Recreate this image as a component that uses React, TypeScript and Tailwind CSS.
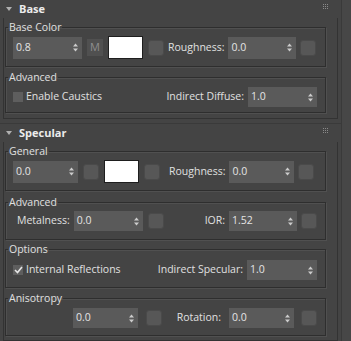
import React from "react";

const FONT = "font-['Open_Sans',sans-serif]";

const Arrows = () => (
  <svg width="5" height="9" viewBox="0 0 5 9" className="shrink-0">
    <path d="M2.5 0.5 L5 3.5 L0 3.5 Z" fill="#cccccc" />
    <path d="M0 5.5 L5 5.5 L2.5 8.5 Z" fill="#cccccc" />
  </svg>
);

const Spinner = ({
  value,
  w,
  tall,
}: {
  value: string;
  w: string;
  tall?: boolean;
}) => (
  <div
    className={`flex items-center justify-between bg-[#5a5a5a] pl-[3px] pr-[4px] text-[#e4e4e4] ${w} ${
      tall ? "h-[22px]" : "h-[20px]"
    }`}
  >
    <span>{value}</span>
    <Arrows />
  </div>
);

const MapBtn = () => (
  <div className="w-[16px] h-[16px] rounded-[3px] bg-[#575757] border border-[#4a4a4a] shrink-0" />
);

const Swatch = () => (
  <div className="w-[35px] h-[23px] bg-white border border-[#1e1e1e] shrink-0" />
);

const Check = ({ checked }: { checked?: boolean }) => (
  <div className="w-[10px] h-[10px] bg-[#5e5e5e] flex items-center justify-center shrink-0">
    {checked && (
      <svg width="9" height="8" viewBox="0 0 9 8">
        <path
          d="M1 4 L3.5 6.5 L8 1"
          stroke="#e6e6e6"
          strokeWidth="1.6"
          fill="none"
        />
      </svg>
    )}
  </div>
);

const Group = ({
  label,
  children,
  className = "",
}: {
  label: string;
  children: React.ReactNode;
  className?: string;
}) => (
  <fieldset
    className={`border border-[#2e2e2e] shadow-[1px_1px_0_#505050,inset_1px_1px_0_#505050] px-[2px] w-[321px] ${className}`}
  >
    <legend className="px-[1px] leading-[14px] text-[#e0e0e0]">{label}</legend>
    {children}
  </fieldset>
);

const Grip = () => (
  <div className="grid grid-cols-3 gap-[1px] absolute right-[13px] top-[4px]">
    {Array.from({ length: 9 }).map((_, i) => (
      <div key={i} className="w-[1px] h-[1px] bg-[#8a8a8a]" />
    ))}
  </div>
);

const Header = ({ title, className = "" }: { title: string; className?: string }) => (
  <div className={`relative flex items-center h-[19px] pl-[6px] ${className}`}>
    <svg width="6" height="5" viewBox="0 0 6 5" className="mr-[7px]">
      <path d="M0 0 L6 0 L3 4 Z" fill="#b0b0b0" />
    </svg>
    <span className="font-bold text-[11px] text-[#ececec]">{title}</span>
    <Grip />
  </div>
);

export default function App() {
  return (
    <div
      className={`flex w-[351px] h-[341px] bg-[#444444] text-[10.5px] overflow-hidden ${FONT}`}
    >
      <div className="w-[341px] shrink-0 flex flex-col">
        {/* Base */}
        <Header title="Base" />
        <div className="mx-[3px] border-x border-b border-[#333333] pl-[1px] pt-[2px] pb-[5px]">
          <Group label="Base Color" className="pt-[2px] pb-[7px]">
            <div className="flex items-center pl-[5px]">
              <Spinner value="0.8" w="w-[69px]" tall />
              <div className="ml-[5px] w-[16px] h-[17px] bg-[#505050] text-[#8e8e8e] text-[11px] flex items-center justify-center">
                M
              </div>
              <div className="ml-[5px]">
                <Swatch />
              </div>
              <div className="ml-[5px]">
                <MapBtn />
              </div>
              <span className="ml-[4px] text-[#e0e0e0]">Roughness:</span>
              <div className="ml-[4px]">
                <Spinner value="0.0" w="w-[68px]" tall />
              </div>
              <div className="ml-[4px]">
                <MapBtn />
              </div>
            </div>
          </Group>
          <Group label="Advanced" className="mt-[3px] pt-[3px] pb-[5px]">
            <div className="flex items-center pl-[5px]">
              <Check />
              <span className="ml-[3px] text-[#e0e0e0]">Enable Caustics</span>
              <span className="ml-auto text-[#e0e0e0]">Indirect Diffuse:</span>
              <div className="ml-[4px] mr-[6px]">
                <Spinner value="1.0" w="w-[69px]" />
              </div>
            </div>
          </Group>
        </div>

        {/* Specular */}
        <Header title="Specular" className="mt-[4px] h-[20px] border-t border-[#3a3a3a]" />
        <div className="mx-[3px] border-x border-b border-[#333333] pl-[1px] pt-[2px] pb-[4px] flex-1">
          <Group label="General" className="pt-[2px] pb-[7px]">
            <div className="flex items-center pl-[5px]">
              <Spinner value="0.0" w="w-[65px]" tall />
              <div className="ml-[5px]">
                <MapBtn />
              </div>
              <div className="ml-[5px]">
                <Swatch />
              </div>
              <div className="ml-[5px]">
                <MapBtn />
              </div>
              <span className="ml-[9px] text-[#e0e0e0]">Roughness:</span>
              <div className="ml-[4px]">
                <Spinner value="0.0" w="w-[65px]" tall />
              </div>
              <div className="ml-[4px]">
                <MapBtn />
              </div>
            </div>
          </Group>
          <Group label="Advanced" className="mt-[4px] pt-[2px] pb-[8px]">
            <div className="flex items-center pl-[9px]">
              <span className="text-[#e0e0e0]">Metalness:</span>
              <div className="ml-[4px]">
                <Spinner value="0.0" w="w-[69px]" />
              </div>
              <div className="ml-[5px]">
                <MapBtn />
              </div>
              <span className="ml-auto text-[#e0e0e0]">IOR:</span>
              <div className="ml-[4px]">
                <Spinner value="1.52" w="w-[68px]" />
              </div>
              <div className="ml-[4px] mr-[6px]">
                <MapBtn />
              </div>
            </div>
          </Group>
          <Group label="Options" className="mt-[2px] pt-[4px] pb-[7px]">
            <div className="flex items-center pl-[5px]">
              <Check checked />
              <span className="ml-[3px] text-[#e0e0e0]">Internal Reflections</span>
              <span className="ml-auto text-[#e0e0e0]">Indirect Specular:</span>
              <div className="ml-[4px] mr-[6px]">
                <Spinner value="1.0" w="w-[70px]" />
              </div>
            </div>
          </Group>
          <Group label="Anisotropy" className="mt-[3px] pt-[3px] pb-[7px]">
            <div className="flex items-center pl-[65px]">
              <Spinner value="0.0" w="w-[65px]" />
              <div className="ml-[8px]">
                <MapBtn />
              </div>
              <span className="ml-auto text-[#e0e0e0]">Rotation:</span>
              <div className="ml-[8px]">
                <Spinner value="0.0" w="w-[65px]" />
              </div>
              <div className="ml-[7px] mr-[6px]">
                <MapBtn />
              </div>
            </div>
          </Group>
        </div>
      </div>
      <div className="flex-1 border-l border-[#3a3a3a] bg-[#474747]" />
    </div>
  );
}
